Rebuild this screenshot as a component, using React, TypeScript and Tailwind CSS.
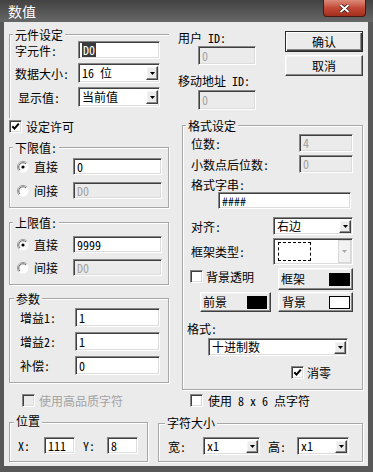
import React from "react";

const sunkenBase =
  "border border-t-[#858585] border-l-[#858585] border-r-white border-b-white shadow-[inset_1px_1px_0_#404040,inset_-1px_-1px_0_#dcdcdc]";
const raisedBase =
  "bg-[#ebebeb] border border-t-white border-l-white border-r-[#404040] border-b-[#404040] shadow-[inset_-1px_-1px_0_#8a8a8a,inset_1px_1px_0_#f4f4f4]";
const groupBorder =
  "relative border border-[#a7a7a7] shadow-[inset_1px_1px_0_#fff,1px_1px_0_#fff]";

type Kids = { children?: React.ReactNode };

function Field({ cls, disabled, children }: { cls: string; disabled?: boolean } & Kids) {
  return (
    <div
      className={`${sunkenBase} ${cls} flex items-center pl-[3px] leading-[14px] whitespace-nowrap overflow-hidden ${
        disabled ? "bg-[#ebebeb] text-[#a3a3a3]" : "bg-white text-black"
      }`}
    >
      {children}
    </div>
  );
}

function Arrow({ disabled }: { disabled?: boolean }) {
  return (
    <svg width="5" height="3" viewBox="0 0 5 3">
      <polygon points="0,0 5,0 2.5,3" fill={disabled ? "#a8a8a8" : "#000"} />
    </svg>
  );
}

function Combo({ cls, children, btnCls }: { cls: string; btnCls: string } & Kids) {
  return (
    <div className={`${sunkenBase} ${cls} flex items-center bg-white pl-[3px]`}>
      <div className="flex-1 whitespace-nowrap leading-[14px]">{children}</div>
      <div className={`${raisedBase} w-[12px] ${btnCls} mr-[1px] flex items-center justify-center shrink-0`}>
        <Arrow />
      </div>
    </div>
  );
}

function Check({ checked, disabled }: { checked?: boolean; disabled?: boolean }) {
  return (
    <div
      className={`${sunkenBase} w-[13px] h-[13px] shrink-0 flex items-center justify-center ${
        disabled ? "bg-[#ebebeb]" : "bg-white"
      }`}
    >
      {checked && (
        <svg width="9" height="9" viewBox="0 0 9 9">
          <path d="M1.3 4.2 L3.5 6.6 L7.8 1.6" stroke="#000" strokeWidth="2" fill="none" />
        </svg>
      )}
    </div>
  );
}

function Radio({ checked }: { checked?: boolean }) {
  return (
    <svg width="12" height="12" viewBox="0 0 12 12" className="shrink-0">
      <circle cx="6" cy="6" r="5.5" fill="#fff" />
      <path d="M2.1 9.9 A5.5 5.5 0 0 1 9.9 2.1" stroke="#9a9a9a" strokeWidth="1" fill="none" />
      <path d="M3 9 A4.2 4.2 0 0 1 9 3" stroke="#606060" strokeWidth="1" fill="none" />
      {checked && <circle cx="6" cy="6" r="1.6" fill="#000" />}
    </svg>
  );
}

function Legend({ cls, children }: { cls: string } & Kids) {
  return (
    <span className={`absolute ${cls} px-[2px] bg-[#ebebeb] leading-[13px] whitespace-nowrap`}>{children}</span>
  );
}

function Label({ cls, children }: { cls: string } & Kids) {
  return <span className={`${cls} leading-[13px] whitespace-nowrap shrink-0`}>{children}</span>;
}

export default function App() {
  return (
    <div className="w-[373px] h-[472px] flex flex-col overflow-hidden text-[12px] text-black font-['Noto_Sans_Mono_CJK_SC','Noto_Sans_CJK_SC',sans-serif]">
      {/* title bar */}
      <div className="h-[22px] shrink-0 flex items-start bg-linear-to-b from-[#424242] to-[#676767]">
        <span className="ml-[8px] mt-[3px] text-[14px] leading-[16px] text-white">数值</span>
        <div className="ml-auto mr-[7px] w-[43px] h-[17px] rounded-b-[4px] border border-t-0 border-[#4a1a12] bg-linear-to-b from-[#dc8a7c] via-[#c24835] to-[#a32e1d] flex items-center justify-center">
          <svg width="11" height="9" viewBox="0 0 11 9">
            <path d="M1.5 1 L9.5 8 M9.5 1 L1.5 8" stroke="#3a0d08" strokeWidth="3.4" />
            <path d="M1.5 1 L9.5 8 M9.5 1 L1.5 8" stroke="#fff" strokeWidth="2" />
          </svg>
        </div>
      </div>

      {/* body */}
      <div className="flex-1 flex flex-col bg-[#ebebeb] border-l-[4px] border-r-[5px] border-b-[6px] border-[#585858]">
        <div className="flex items-start">
          {/* left column */}
          <div className="flex flex-col w-[160px] ml-[5px] shrink-0">
            <div className="relative mt-[12px] border-t border-l border-[#a7a7a7] shadow-[inset_1px_1px_0_#fff] pt-[6px] pb-[11px] pl-[5px] flex flex-col gap-[4px]">
              <Legend cls="left-[3px] -top-[7px]">元件设定</Legend>
              <div className="flex items-center">
                <Label cls="w-[63px]">字元件:</Label>
                <Field cls="w-[82px] h-[18px]">
                  <span className="bg-[#3a3a3a] text-white px-[1px]">D0</span>
                </Field>
              </div>
              <div className="flex items-center">
                <Label cls="w-[63px]">数据大小:</Label>
                <Combo cls="w-[82px] h-[20px]" btnCls="h-[14px]">16 位</Combo>
              </div>
              <div className="flex items-center">
                <Label cls="w-[63px] pl-[3px]">显示值:</Label>
                <Combo cls="w-[82px] h-[20px]" btnCls="h-[14px]">当前值</Combo>
              </div>
            </div>

            <div className="mt-[2px] flex items-center gap-[4px] h-[13px]">
              <Check checked />
              <Label cls="">设定许可</Label>
            </div>

            <div className={`${groupBorder} mt-[14px] pt-[10px] pb-[8px] flex flex-col gap-[7px]`}>
              <Legend cls="left-[3px] -top-[7px]">下限值:</Legend>
              <div className="flex items-center pl-[7px]">
                <Radio checked />
                <Label cls="ml-[5px] w-[39px]">直接</Label>
                <Field cls="w-[89px] h-[17px]">0</Field>
              </div>
              <div className="flex items-center pl-[7px]">
                <Radio />
                <Label cls="ml-[5px] w-[39px]">间接</Label>
                <Field cls="w-[89px] h-[17px]" disabled>
                  D0
                </Field>
              </div>
            </div>

            <div className={`${groupBorder} mt-[14px] pt-[13px] pb-[8px] flex flex-col gap-[6px]`}>
              <Legend cls="left-[3px] -top-[7px]">上限值:</Legend>
              <div className="flex items-center pl-[7px]">
                <Radio checked />
                <Label cls="ml-[5px] w-[39px]">直接</Label>
                <Field cls="w-[89px] h-[17px]">9999</Field>
              </div>
              <div className="flex items-center pl-[7px]">
                <Radio />
                <Label cls="ml-[5px] w-[39px]">间接</Label>
                <Field cls="w-[89px] h-[17px]" disabled>
                  D0
                </Field>
              </div>
            </div>

            <div className={`${groupBorder} mt-[13px] pt-[9px] pb-[7px] flex flex-col gap-[5px]`}>
              <Legend cls="left-[4px] -top-[7px]">参数</Legend>
              <div className="flex items-center pl-[10px]">
                <Label cls="w-[55px]">增益1:</Label>
                <Field cls="w-[85px] h-[19px]">1</Field>
              </div>
              <div className="flex items-center pl-[10px]">
                <Label cls="w-[55px]">增益2:</Label>
                <Field cls="w-[85px] h-[19px]">1</Field>
              </div>
              <div className="flex items-center pl-[10px]">
                <Label cls="w-[55px]">补偿:</Label>
                <Field cls="w-[85px] h-[19px]">0</Field>
              </div>
            </div>
          </div>

          {/* right column */}
          <div className="flex flex-col w-[186px] ml-[9px] shrink-0">
            <div className="flex items-start">
              <div className="flex flex-col w-[78px]">
                <Label cls="mt-[9px]">用户 ID:</Label>
                <Field cls="mt-[2px] ml-[20px] w-[58px] h-[19px]" disabled>
                  0
                </Field>
                <Label cls="mt-[9px]">移动地址 ID:</Label>
                <Field cls="mt-[3px] ml-[20px] w-[58px] h-[20px]" disabled>
                  0
                </Field>
              </div>
              <div className="flex flex-col ml-[29px] mt-[9px] gap-[3px]">
                <div className="w-[78px] h-[21px] bg-[#ebebeb] border border-[#2a2a2a] shadow-[inset_1px_1px_0_#fff,inset_-1px_-1px_0_#404040,inset_-2px_-2px_0_#8a8a8a] flex items-center justify-center leading-[14px]">
                  确认
                </div>
                <div className={`${raisedBase} w-[78px] h-[21px] flex items-center justify-center leading-[14px]`}>取消</div>
              </div>
            </div>

            <div className={`${groupBorder} mt-[15px] ml-[4px] w-[181px] pt-[8px] pb-[10px] pl-[4px] flex flex-col`}>
              <Legend cls="left-[3px] -top-[7px]">格式设定</Legend>
              <div className="flex items-center ml-[4px]">
                <Label cls="w-[108px]">位数:</Label>
                <Field cls="w-[54px] h-[18px]" disabled>
                  4
                </Field>
              </div>
              <div className="flex items-center ml-[4px] mt-[3px]">
                <Label cls="w-[108px]">小数点后位数:</Label>
                <Field cls="w-[54px] h-[18px]" disabled>
                  0
                </Field>
              </div>
              <Label cls="ml-[4px] mt-[5px]">格式字串:</Label>
              <Field cls="ml-[31px] mt-[1px] w-[133px] h-[17px]">####</Field>
              <div className="flex items-center ml-[4px] mt-[8px]">
                <Label cls="w-[82px]">对齐:</Label>
                <Combo cls="w-[80px] h-[18px]" btnCls="h-[13px]">右边</Combo>
              </div>
              <div className="flex items-center ml-[4px] mt-[3px]">
                <Label cls="w-[82px]">框架类型:</Label>
                <div className={`${sunkenBase} w-[80px] h-[27px] bg-white flex items-center pl-[4px]`}>
                  <div className="w-[33px] h-[19px] border border-dashed border-black" />
                  <div className="ml-auto mr-[1px] w-[13px] h-[23px] bg-[#f2f2f2] border border-[#d8d8d8] flex items-center justify-center">
                    <Arrow disabled />
                  </div>
                </div>
              </div>
              <div className="flex items-start ml-[3px] mt-[3px]">
                <div className="w-[88px] flex items-center gap-[3px] mt-[2px]">
                  <Check />
                  <Label cls="">背景透明</Label>
                </div>
                <div className={`${raisedBase} w-[75px] h-[22px] flex items-center justify-between pl-[2px] pr-[2px] leading-[14px]`}>
                  <span>框架</span>
                  <div className="w-[21px] h-[13px] bg-black" />
                </div>
              </div>
              <div className="flex items-center ml-[13px] mt-[2px] gap-[7px]">
                <div className={`${raisedBase} w-[71px] h-[20px] flex items-center justify-between pl-[2px] pr-[3px] leading-[14px]`}>
                  <span>前景</span>
                  <div className="w-[20px] h-[13px] bg-black" />
                </div>
                <div className={`${raisedBase} w-[75px] h-[20px] flex items-center justify-between pl-[3px] pr-[2px] leading-[14px]`}>
                  <span>背景</span>
                  <div className="w-[21px] h-[13px] bg-white border border-black" />
                </div>
              </div>
              <Label cls="mt-[10px]">格式:</Label>
              <Combo cls="ml-[21px] mt-[3px] w-[140px] h-[18px]" btnCls="h-[13px]">十进制数</Combo>
              <div className="flex items-center ml-[104px] mt-[10px] gap-[3px]">
                <Check checked />
                <Label cls="">消零</Label>
              </div>
            </div>
          </div>
        </div>

        {/* checkbox row */}
        <div className="flex items-center mt-[4px] h-[13px]">
          <div className="ml-[18px] w-[168px] flex items-center gap-[4px]">
            <Check disabled />
            <Label cls="text-[#a3a3a3]">使用高品质字符</Label>
          </div>
          <div className="flex items-center gap-[5px]">
            <Check />
            <Label cls="">使用 8 x 6 点字符</Label>
          </div>
        </div>

        {/* bottom groups */}
        <div className="flex items-start mt-[15px]">
          <div className={`${groupBorder} ml-[5px] w-[139px] h-[40px] pt-[14px] pl-[8px] flex items-start`}>
            <Legend cls="left-[4px] -top-[9px]">位置</Legend>
            <div className="flex items-center">
              <Label cls="w-[26px]">X:</Label>
              <Field cls="w-[31px] h-[17px]">111</Field>
              <Label cls="ml-[8px] w-[24px]">Y:</Label>
              <Field cls="w-[31px] h-[17px]">8</Field>
            </div>
          </div>
          <div className={`${groupBorder} ml-[10px] mt-[1px] w-[205px] h-[39px] pt-[13px] pl-[9px] flex items-start`}>
            <Legend cls="left-[6px] -top-[8px]">字符大小</Legend>
            <div className="flex items-center">
              <Label cls="w-[35px]">宽:</Label>
              <Combo cls="w-[57px] h-[18px]" btnCls="h-[13px]">x1</Combo>
              <Label cls="ml-[8px] w-[29px]">高:</Label>
              <Combo cls="w-[52px] h-[18px]" btnCls="h-[13px]">x1</Combo>
            </div>
          </div>
        </div>
      </div>
    </div>
  );
}
